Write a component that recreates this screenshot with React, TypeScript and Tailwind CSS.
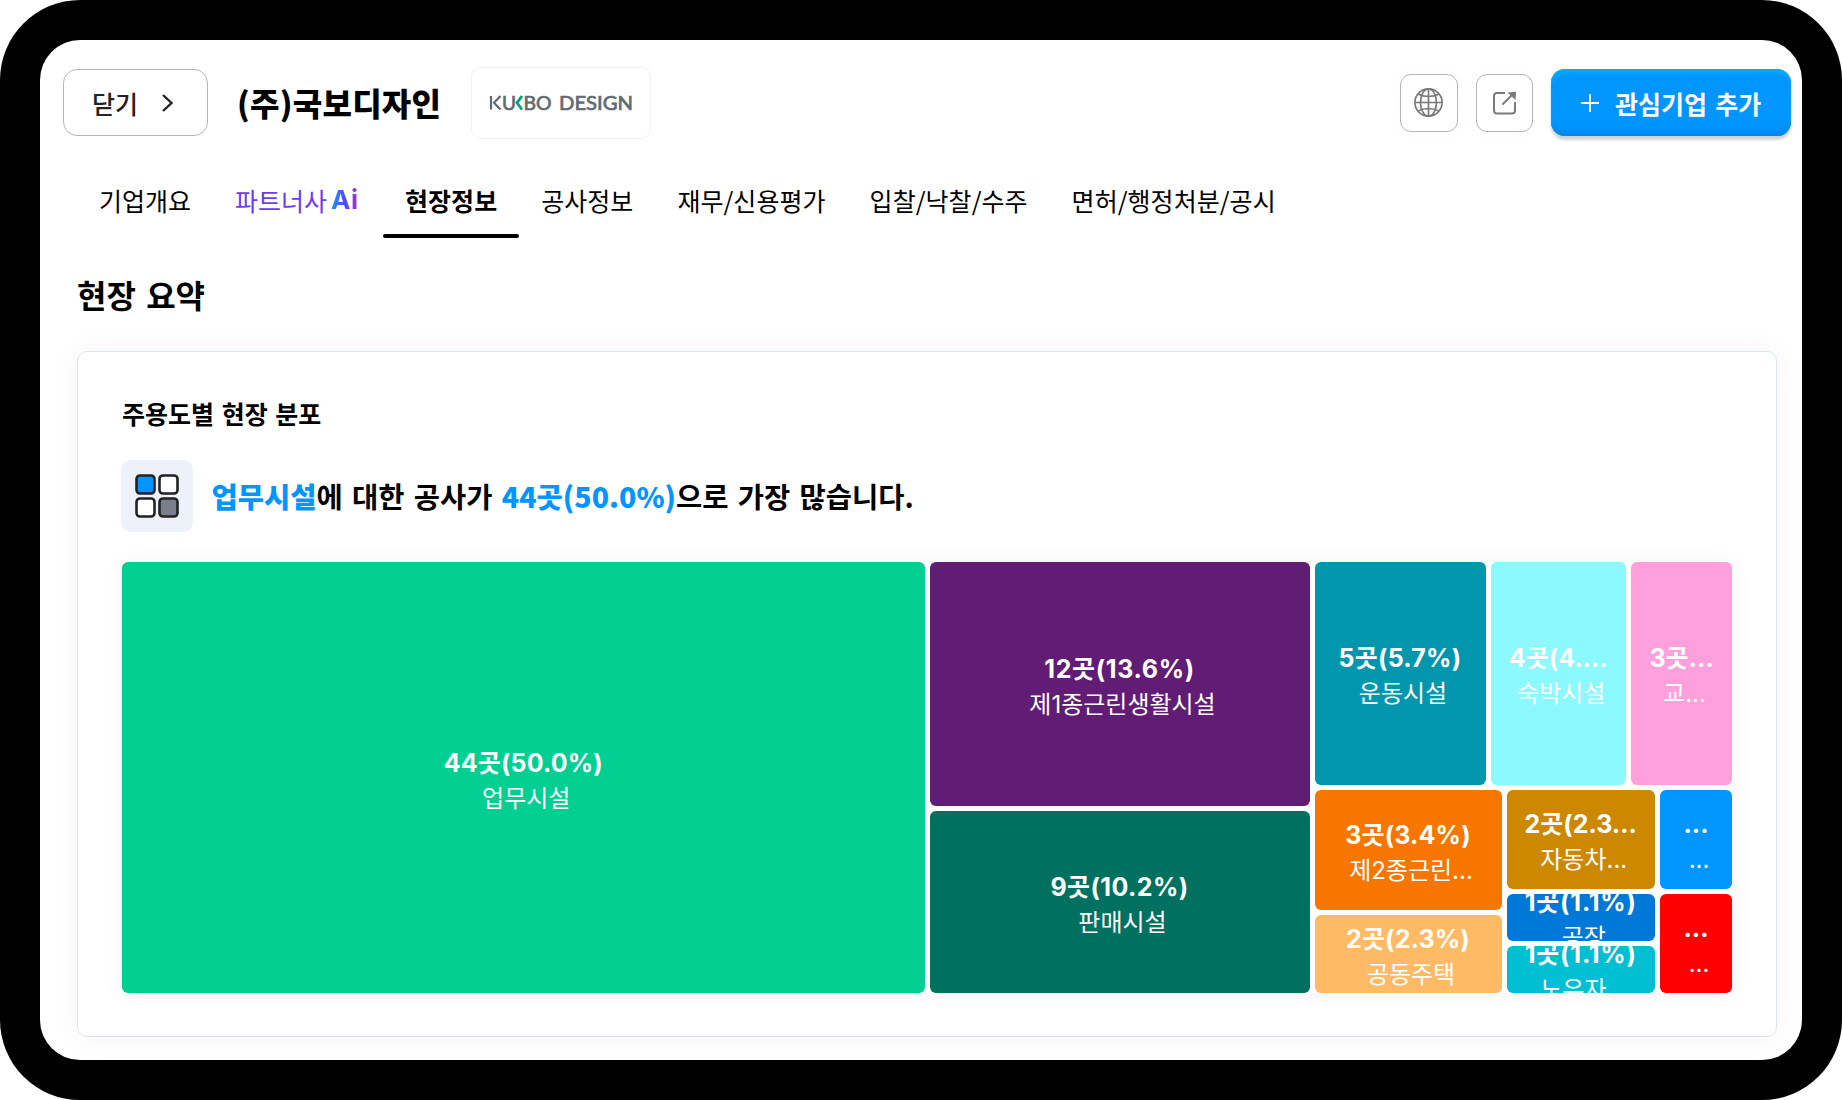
import React from 'react';

interface Cell {
  count: string;
  name: string;
  className: string;
}

const tabs = ['현장정보', '공사정보', '재무/신용평가', '입찰/낙찰/수주', '면허/행정처분/공시'];

const cells: Record<string, Cell> = {
  office: { count: '44곳(50.0%)', name: '업무시설', className: 'w-[802.5px] bg-[#00cf92] tracking-[0.15px]' },
  living1: { count: '12곳(13.6%)', name: '제1종근린생활시설', className: 'h-[244px] bg-[#611c74] tracking-[0.65px]' },
  retail: { count: '9곳(10.2%)', name: '판매시설', className: 'flex-1 bg-[#007160] tracking-[0.4px]' },
  sports: { count: '5곳(5.7%)', name: '운동시설', className: 'w-[171px] bg-[#0097ae] tracking-[0.25px]' },
  lodging: { count: '4곳(4....', name: '숙박시설', className: 'w-[135.5px] bg-[#8cf8ff]' },
  education: { count: '3곳...', name: '교...', className: 'flex-1 bg-[#ff9fdc]' },
  living2: { count: '3곳(3.4%)', name: '제2종근린...', className: 'h-[120px] bg-[#f77600] tracking-[0.15px]' },
  housing: { count: '2곳(2.3%)', name: '공동주택', className: 'flex-1 bg-[#ffba65] tracking-[0.15px]' },
  car: { count: '2곳(2.3...', name: '자동차...', className: 'h-[99px] bg-[#cc8800]' },
  factory: { count: '1곳(1.1%)', name: '공장', className: 'h-[47px] bg-[#0078d7] tracking-[0.8px]' },
  senior: { count: '1곳(1.1%)', name: '노유자...', className: 'flex-1 bg-[#00bfd3] tracking-[0.8px]' },
  etc1: { count: '...', name: '...', className: 'h-[99px] bg-[#0095ff]' },
  etc2: { count: '...', name: '...', className: 'flex-1 bg-[#ff0000]' },
};

function TreeCell({ cell }: { cell: Cell }) {
  return (
    <div
      className={`flex min-h-0 shrink-0 flex-col items-center justify-center overflow-hidden rounded-md font-['Inter','Noto_Sans_CJK_KR',sans-serif] whitespace-nowrap text-white ${cell.className}`}
    >
      <div className="mt-[5px] h-[35px] shrink-0 text-[25px] leading-[35px] font-bold">{cell.count}</div>
      <div className="h-[34px] shrink-0 pl-1.5 text-[24px] leading-[35px] tracking-normal">{cell.name}</div>
    </div>
  );
}

function GlobeIcon() {
  return (
    <svg width="30" height="30" viewBox="0 0 30 30" fill="none" stroke="#7a7a7a" strokeWidth="1.7">
      <circle cx="14.5" cy="14.5" r="13.6" />
      <ellipse cx="14.5" cy="14.5" rx="8" ry="13.6" />
      <path d="M14.5 .9v27.2M.9 14.5h27.2M4.100 6.100c5.8 3.2 15 3.2 20.8 0M4.100 22.900c5.8-3.2 15-3.2 20.8 0" />
    </svg>
  );
}

function ShareIcon() {
  return (
    <svg width="26" height="26" viewBox="0 0 26 26" fill="none" stroke="#7a7a7a" strokeWidth="2">
      <path d="M13 3H5a3 3 0 0 0-3 3v14.5a3 3 0 0 0 3 3h15a3 3 0 0 0 3-3V12" />
      <path d="M11 14 20.500 4.500" strokeLinecap="round" />
      <path d="M15.500 2.500l8.5-.7L23.500 10z" fill="#7a7a7a" stroke="none" />
    </svg>
  );
}

function KukboLogo() {
  return (
    <svg width="144" height="26" viewBox="0 0 144 26" fill="none" className="overflow-visible">
      <g fill="#5f6b73" stroke="#5f6b73" strokeWidth="0.7" fontFamily="Lato, sans-serif" fontSize="19">
        <text x="13" y="19.5" textLength="14" lengthAdjust="spacingAndGlyphs">U</text>
        <text x="34.5" y="19.5" textLength="28" lengthAdjust="spacingAndGlyphs">BO</text>
        <text x="70" y="19.5" textLength="74" lengthAdjust="spacingAndGlyphs">DESIGN</text>
      </g>
      <path d="M2 6v13.5M11.5 6 5 12.8l6.5 6.7" stroke="#5f6b73" strokeWidth="2.2" />
      <path d="M33 6 28 12.8l5 6.7" stroke="#00a47c" strokeWidth="2.8" />
    </svg>
  );
}

export default function App() {
  return (
    <div className="h-[1100px] w-[1842px] rounded-[80px] bg-black p-10 font-['Noto_Sans_CJK_KR',sans-serif] text-black">
      <div className="h-full overflow-hidden rounded-[40px] bg-white">
        <header className="flex h-[125px] items-center pr-[11px] pl-[23px]">
          <button className="flex h-[67px] w-[145px] items-center rounded-[14px] border border-[#b5b5b5] pt-px pl-[28px] text-[25px] font-medium text-[#222]">
            <span className="pt-px">닫기</span>
            <svg className="ml-[23px]" width="14" height="20" viewBox="0 0 14 20" fill="none" stroke="#222" strokeWidth="2.4">
              <path d="M2 2l8.5 8L2 18" />
            </svg>
          </button>
          <h1 className="ml-[29px] pb-px text-[32px] leading-none font-black tracking-[0.25px]">(주)국보디자인</h1>
          <div className="ml-[30px] flex h-[72px] w-[180px] items-center justify-center rounded-[10px] border border-[#f0f0f8]">
            <KukboLogo />
          </div>
          <div className="ml-auto flex items-center gap-[18px]">
            <button className="flex size-[58px] items-center justify-center rounded-[11px] border border-[#b5b5b5] shadow-[0_0_24px_rgba(0,0,0,0.02)]">
              <GlobeIcon />
            </button>
            <button className="flex h-[58px] w-[57px] items-center justify-center rounded-[11px] border border-[#b5b5b5] shadow-[0_0_24px_rgba(0,0,0,0.02)]">
              <ShareIcon />
            </button>
            <button className="flex h-[67px] w-[240px] items-center rounded-[14px] bg-[#0095ff] pt-px pl-[30px] text-[25px] font-bold [word-spacing:2.5px] text-white shadow-[0_4px_3px_rgba(0,0,0,0.18),inset_0_4px_5px_#00aeff,inset_0_-4px_5px_#0085ec]">
              <svg className="mr-[16px]" width="18" height="18" viewBox="0 0 18 18" stroke="#fff" strokeWidth="2">
                <path d="M9 0v18M0 9h18" />
              </svg>
              <span className="pt-px">관심기업 추가</span>
            </button>
          </div>
        </header>

        <nav className="flex h-[73px] pl-[37px] text-[25px] leading-[71px]">
          <div className="px-[22px]">기업개요</div>
          <div className="flex w-[170px] px-[22px] text-[#6a3df5]">
            파트너사
            <span className="ml-[4px] bg-linear-to-r from-[#0090ff] via-[#4b4dff] to-[#b000d8] bg-clip-text font-['Inter',sans-serif] text-[26px] leading-[69px] font-bold tracking-[0.5px] text-transparent">
              Ai
            </span>
          </div>
          {tabs.map((tab, i) => (
            <div key={tab} className="flex flex-col">
              <div className={`h-[69px] px-[22px] tracking-[0.05px] ${i === 0 ? 'font-bold' : ''}`}>{tab}</div>
              {i === 0 && <div className="h-1 rounded-full bg-black" />}
            </div>
          ))}
        </nav>

        <main className="px-[37px]">
          <h2 className="h-[113px] pt-[40px] text-[32px] leading-[32px] font-bold [word-spacing:3px]">현장 요약</h2>
          <section className="h-[686px] w-[1700px] rounded-[10px] border border-[#dce4f0] px-[44px] pt-[43px] shadow-[0_0_30px_rgba(0,0,0,0.05)]">
            <h3 className="h-[65px] text-[25px] leading-[36px] font-bold [word-spacing:2px]">주용도별 현장 분포</h3>
            <div className="-ml-px flex items-center">
              <div className="flex size-[72px] items-center justify-center rounded-[10px] bg-[#eef1fa]">
                <svg width="46" height="46" viewBox="0 0 46 46" stroke="#222" strokeWidth="2.6">
                  <rect x="2.5" y="2.5" width="18" height="18" rx="3.5" fill="#0095ff" />
                  <rect x="25.5" y="2.5" width="18" height="18" rx="3.5" fill="#fff" />
                  <rect x="2.5" y="25.5" width="18" height="18" rx="3.5" fill="#fff" />
                  <rect x="25.5" y="25.5" width="18" height="18" rx="3.5" fill="#7a808b" />
                </svg>
              </div>
              <p className="ml-[18.5px] text-[28.5px] leading-none font-bold tracking-[0.04px] [word-spacing:2.7px]">
                <span className="font-black text-[#0095ff]">업무시설</span>에 대한 공사가{' '}
                <span className="font-black text-[#0095ff]">44곳(50.0%)</span>으로 가장 많습니다.
              </p>
            </div>

            <div className="mt-[30px] flex h-[431px] w-[1610px] gap-[5px] shadow-[0_0_20px_rgba(0,0,0,0.05)]">
              <TreeCell cell={cells.office} />
              <div className="flex w-[380px] flex-col gap-[5px]">
                <TreeCell cell={cells.living1} />
                <TreeCell cell={cells.retail} />
              </div>
              <div className="flex flex-1 flex-col gap-[5px]">
                <div className="flex h-[222.5px] shrink-0 gap-[5px]">
                  <TreeCell cell={cells.sports} />
                  <TreeCell cell={cells.lodging} />
                  <TreeCell cell={cells.education} />
                </div>
                <div className="flex min-h-0 flex-1 gap-[5px]">
                  <div className="flex w-[187px] flex-col gap-[5px]">
                    <TreeCell cell={cells.living2} />
                    <TreeCell cell={cells.housing} />
                  </div>
                  <div className="flex w-[148.5px] flex-col gap-[5px]">
                    <TreeCell cell={cells.car} />
                    <TreeCell cell={cells.factory} />
                    <TreeCell cell={cells.senior} />
                  </div>
                  <div className="flex flex-1 flex-col gap-[5px]">
                    <TreeCell cell={cells.etc1} />
                    <TreeCell cell={cells.etc2} />
                  </div>
                </div>
              </div>
            </div>
          </section>
        </main>
      </div>
    </div>
  );
}
